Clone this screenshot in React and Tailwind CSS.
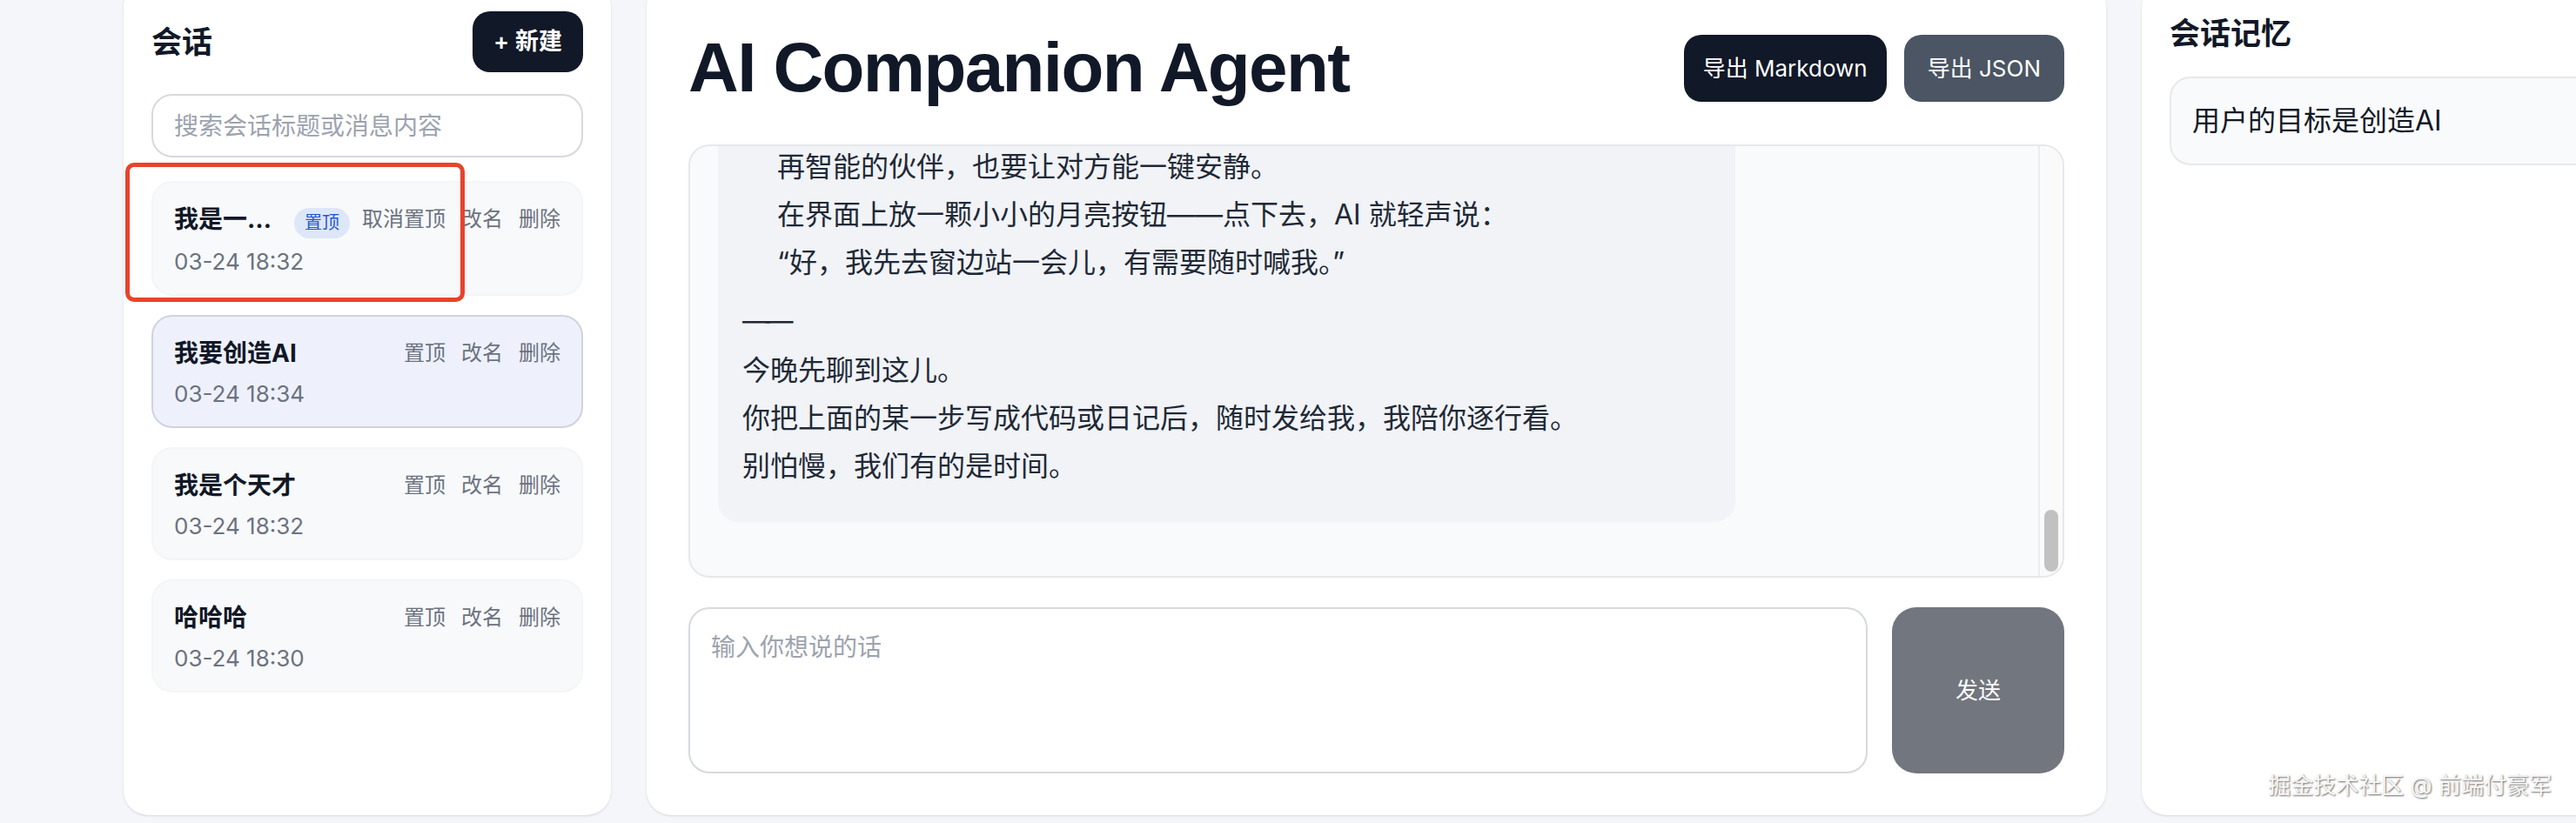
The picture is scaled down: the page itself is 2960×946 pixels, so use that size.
import React from "react";
import clsx from "clsx";

const sessions = [
  { id: 1, title: "我是一个天才程序员", time: "03-24 18:32", pinned: true },
  { id: 2, title: "我要创造AI", time: "03-24 18:34", active: true },
  { id: 3, title: "我是个天才", time: "03-24 18:32" },
  { id: 4, title: "哈哈哈", time: "03-24 18:30" },
];

const SessionCard = ({ session }) => {
  const { title, time, pinned, active } = session;
  return (
    <div
      className={clsx(
        "rounded-[24px] border-2 px-[24px] pt-[22px] pb-[19px]",
        active ? "bg-[#eef1fc] border-[#cfd3de]" : "bg-[#f8f9fb] border-[#f4f5f7]"
      )}
    >
      <div className="flex items-start justify-between">
        <div className="flex items-start gap-[18px] min-w-0">
          <span
            className={clsx(
              "block text-[28px] font-bold leading-[40px] text-[#111827]",
              pinned && "w-[120px] overflow-hidden text-ellipsis whitespace-nowrap"
            )}
          >
            {title}
          </span>
          {pinned && (
            <span className="mt-[7px] h-[35px] px-[12px] rounded-full bg-[#dde7f8] text-[#2456d6] text-[20px] leading-[35px]">
              置顶
            </span>
          )}
        </div>
        <div className="flex gap-[18px] text-[24px] leading-[40px] text-[#6b7280] shrink-0">
          <span>{pinned ? "取消置顶" : "置顶"}</span>
          <span>改名</span>
          <span>删除</span>
        </div>
      </div>
      <div className="mt-[9px] text-[26px] leading-[36px] text-[#6b7280]">{time}</div>
    </div>
  );
};

const App = () => {
  return (
    <div className="relative w-[2960px] h-[946px] overflow-hidden bg-[#f4f6fa] font-['Inter','Noto_Sans_CJK_SC',sans-serif] text-[#111827]">
      <div className="flex gap-[41px] ml-[142px] mt-[-20px] h-[957px]">
        {/* 会话列表 */}
        <aside className="w-[560px] shrink-0 bg-white rounded-[28px] shadow-sm px-[32px] pt-[33px]">
          <div className="flex items-center justify-between h-[70px]">
            <h2 className="text-[35px] leading-[48px] font-bold">会话</h2>
            <button className="h-[70px] px-[24px] rounded-[20px] bg-[#111827] text-white text-[27px] leading-[40px] font-semibold">
              + 新建
            </button>
          </div>
          <input
            className="mt-[25px] w-full h-[73px] rounded-[24px] border-2 border-[#d6d9de] px-[24px] text-[28px] outline-none placeholder:text-[#9ca3af]"
            placeholder="搜索会话标题或消息内容"
          />
          <div className="mt-[27px] flex flex-col gap-[22px]">
            {sessions.map((s) => (
              <SessionCard key={s.id} session={s} />
            ))}
          </div>
        </aside>

        {/* 聊天区 */}
        <main className="w-[1677px] shrink-0 bg-white rounded-[28px] shadow-sm px-[48px] pt-[54px] pb-[48px] flex flex-col">
          <div className="flex items-center justify-between h-[88px]">
            <h1 className="text-[80px] leading-[88px] font-bold tracking-[-0.02em] text-[#111827] font-['Liberation_Sans','Noto_Sans_CJK_SC',sans-serif]">
              AI Companion Agent
            </h1>
            <div className="flex gap-[20px]">
              <button className="h-[77px] px-[22px] rounded-[20px] bg-[#111827] text-white text-[26px]">
                导出 Markdown
              </button>
              <button className="h-[77px] px-[27px] rounded-[20px] bg-[#4b5563] text-white text-[26px]">
                导出 JSON
              </button>
            </div>
          </div>

          <div className="mt-[44px] h-[498px] flex rounded-[24px] border-2 border-[#e6e8eb] bg-[#f9fafb] overflow-hidden">
            <div className="flex-1 flex flex-col justify-end overflow-hidden pl-[32px] pb-[62px]">
              <div className="w-[1169px] shrink-0 rounded-[24px] bg-[#f1f3f6] px-[28px] pt-[28px] pb-[37px] text-[32px] leading-[55px] text-[#1f2937]">
                <p>4. 给它一个「晚安」开关</p>
                <div className="pl-[40px]">
                  <p>有时候你只是想安静地待一会儿，</p>
                  <p>不想被提醒，也不想被追问。</p>
                  <p>再智能的伙伴，也要让对方能一键安静。</p>
                  <p>在界面上放一颗小小的月亮按钮——点下去，AI 就轻声说：</p>
                  <p>“好，我先去窗边站一会儿，有需要随时喊我。”</p>
                </div>
                <p className="mt-[12px] tracking-[-0.17em]">——</p>
                <div className="mt-[2px]">
                  <p>今晚先聊到这儿。</p>
                  <p>你把上面的某一步写成代码或日记后，随时发给我，我陪你逐行看。</p>
                  <p>别怕慢，我们有的是时间。</p>
                </div>
              </div>
            </div>
            <div className="w-[28px] shrink-0 border-l-2 border-[#ececec] bg-[#fafafa] flex flex-col justify-end items-center pb-[5px]">
              <div className="w-[16px] h-[71px] rounded-full bg-[#c1c1c1]" />
            </div>
          </div>

          <div className="mt-[34px] h-[191px] flex gap-[28px]">
            <textarea
              className="flex-1 resize-none rounded-[24px] border-2 border-[#d6d9de] p-[24px] text-[28px] leading-[40px] outline-none placeholder:text-[#9ca3af]"
              placeholder="输入你想说的话"
            />
            <button className="w-[198px] shrink-0 rounded-[28px] bg-[#72767e] text-white text-[26px]">
              发送
            </button>
          </div>
        </main>

        {/* 会话记忆 */}
        <aside className="w-[600px] shrink-0 bg-white rounded-[28px] shadow-sm px-[32px] pt-[34px]">
          <h2 className="text-[35px] leading-[48px] font-bold">会话记忆</h2>
          <div className="mt-[26px] rounded-[24px] border-2 border-[#e6e8eb] bg-[#f9fafb] px-[24px] py-[25px] text-[32px] leading-[48px] text-[#111827]">
            用户的目标是创造AI
          </div>
        </aside>
      </div>

      {/* 标注框 */}
      <div className="absolute left-[144px] top-[187px] w-[390px] h-[160px] rounded-[10px] border-[5px] border-[#e8432b]" />

      {/* 水印 */}
      <div className="absolute right-[28px] bottom-[24px] text-[26px] text-[#f7f7f7] [text-shadow:1px_1px_2px_rgba(0,0,0,0.6)]">
        掘金技术社区 @ 前端付豪军
      </div>
    </div>
  );
};

export default App;
